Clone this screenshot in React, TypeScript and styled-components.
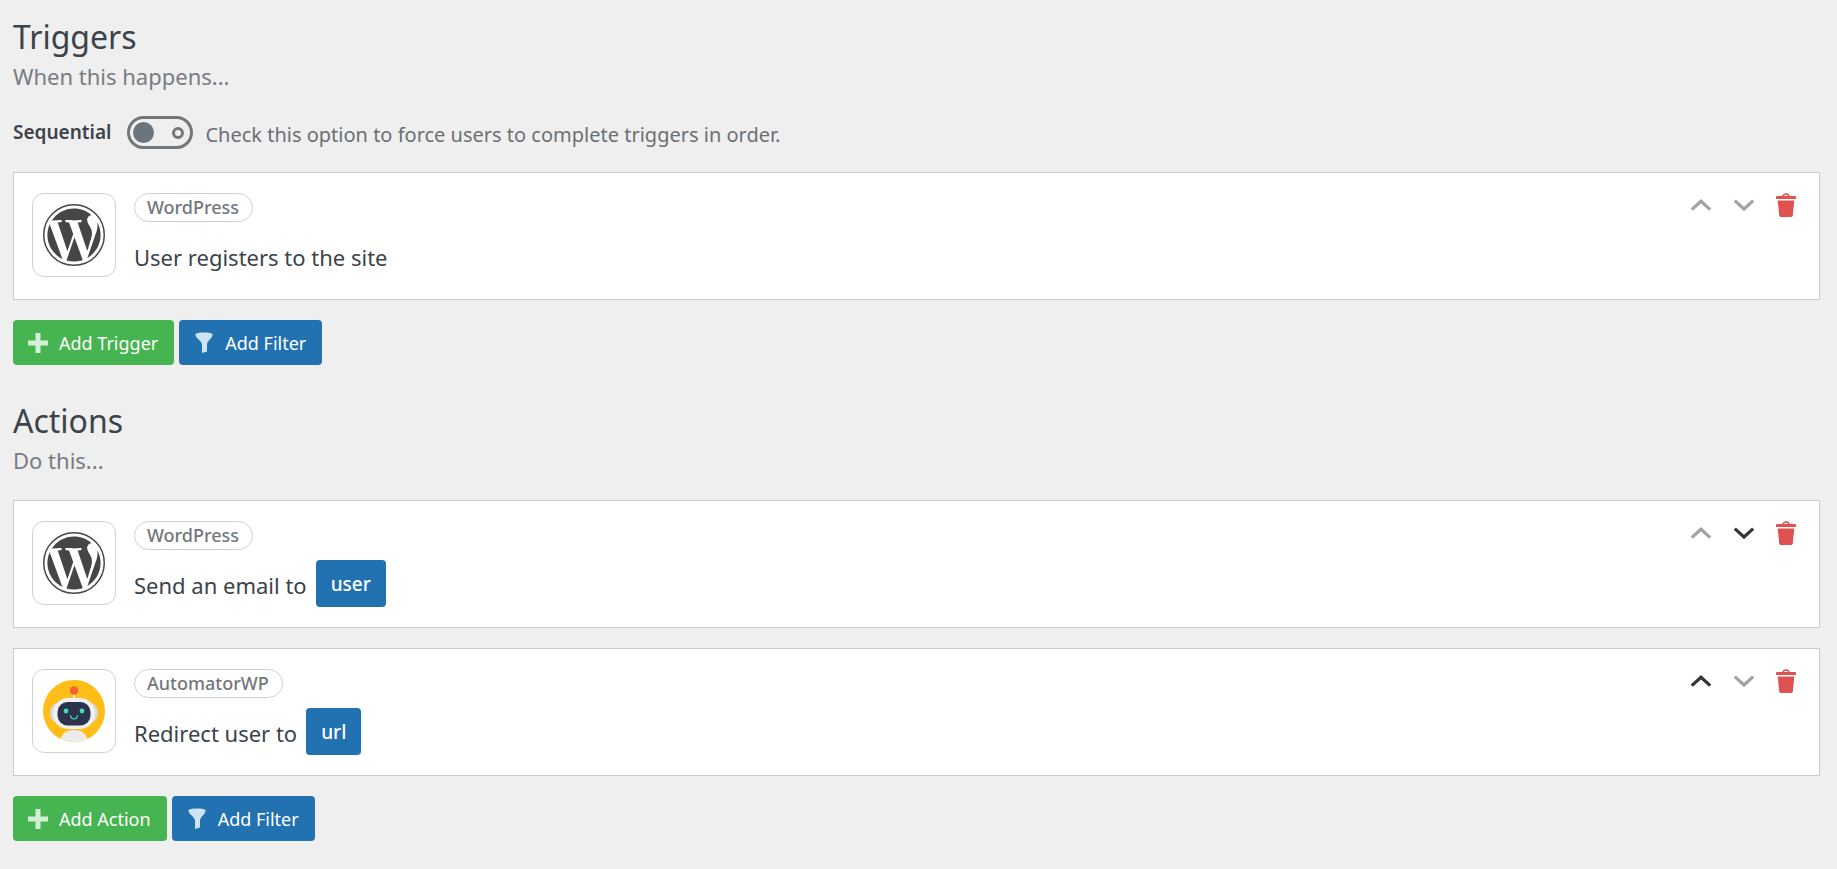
import React, { useState } from "react";
import styled, { createGlobalStyle } from "styled-components";

const fontStack = `"Noto Sans", "Open Sans", sans-serif`;

const GlobalStyle = createGlobalStyle`
  *, *::before, *::after { box-sizing: border-box; }
  body {
    margin: 0;
    background: #efefef;
    color: #3c434a;
    font-family: ${fontStack};
    font-size: 20px;
  }
`;

const Page = styled.main`
  padding: 16px 17px 24px 13px;
  display: flex;
  flex-direction: column;
  gap: 35px;
`;

const Section = styled.section`
  display: flex;
  flex-direction: column;
`;

const Heading = styled.h2`
  margin: 0;
  font-size: 32px;
  font-weight: 400;
  line-height: 41px;
`;

const Subheading = styled.p`
  margin: 3px 0 24px;
  font-size: 22px;
  line-height: 32px;
  color: #787c82;
`;

const OptionRow = styled.div`
  display: flex;
  align-items: center;
  margin-bottom: 23px;
  line-height: 33px;
`;

const OptionLabel = styled.label`
  line-height: 33px;
  font-size: 19px;
  font-weight: 600;
  margin-right: 16px;
`;

const OptionHint = styled.span`
  font-size: 20px;
  margin-left: 12px;
  padding-top: 5px;
  line-height: 28px;
  color: #6c6f73;
`;

const Switch = styled.input`
  appearance: none;
  display: flex;
  align-items: center;
  justify-content: space-between;
  flex: none;
  width: 66px;
  height: 33px;
  margin: 0;
  padding: 0 6px 0 3px;
  border: 3px solid #72777c;
  border-radius: 17px;
  cursor: pointer;

  &::before {
    content: "";
    width: 21px;
    height: 21px;
    border-radius: 50%;
    background: #6c757d;
  }
  &::after {
    content: "";
    width: 12px;
    height: 12px;
    border-radius: 50%;
    border: 3px solid #72777c;
  }
  &:checked {
    flex-direction: row-reverse;
    padding: 0 3px 0 6px;
  }
`;

const CardList = styled.div`
  display: flex;
  flex-direction: column;
  gap: 20px;
  margin-bottom: 20px;
`;

const Card = styled.article`
  display: flex;
  align-items: flex-start;
  gap: 18px;
  min-height: 128px;
  padding: 20px 20px 20px 18px;
  background: #fff;
  border: 1px solid #c9cbce;
`;

const IconTile = styled.div`
  display: flex;
  align-items: center;
  justify-content: center;
  flex: none;
  width: 84px;
  height: 84px;
  border: 1px solid #cfd1d4;
  border-radius: 12px;
  color: #464646;
`;

const CardBody = styled.div`
  flex: 1;
  display: flex;
  flex-direction: column;
  align-items: flex-start;
  gap: 10px;
`;

const Tag = styled.span`
  padding: 0 13px 0 12px;
  border: 1px solid #cfd1d4;
  border-radius: 15px;
  font-size: 18px;
  font-weight: 500;
  line-height: 27px;
  color: #72777c;
`;

const Sentence = styled.div`
  display: flex;
  align-items: center;
  gap: 9px;
`;

const SentenceText = styled.span`
  padding-top: 4px;
  font-size: 22px;
  line-height: 43px;
`;

const Token = styled.button`
  height: 47px;
  padding: 2px 15px 0;
  border: 0;
  border-radius: 4px;
  background: #2271b1;
  color: #fff;
  font: 500 19px/45px ${fontStack};
  cursor: pointer;
`;

const Controls = styled.div`
  display: flex;
  gap: 19px;
`;

const IconButton = styled.button<{ $tone: "dark" | "danger" }>`
  display: flex;
  padding: 0;
  border: 0;
  background: none;
  color: ${(p) => (p.$tone === "danger" ? "#e05252" : "#32373c")};
  cursor: pointer;

  &:disabled {
    color: #a0a3a6;
    cursor: default;
  }
`;

const ButtonRow = styled.div`
  display: flex;
  gap: 5px;
`;

const ActionButton = styled.button<{ $color: string }>`
  display: flex;
  align-items: center;
  gap: 9px;
  height: 45px;
  padding: 0 16px 0 13px;
  border: 0;
  border-radius: 4px;
  background: ${(p) => p.$color};
  color: #fff;
  font: 400 18px/45px ${fontStack};
  cursor: pointer;
`;

const ButtonText = styled.span`
  padding-top: 2px;
  line-height: 43px;
`;

const Chevron = ({ up }: { up?: boolean }) => (
  <svg width="24" height="24" viewBox="0 0 24 24" fill="none" aria-hidden="true">
    <path
      d={up ? "M2.8 16.6 12 8.2l9.2 8.4" : "M2.8 7.6 12 16l9.2-8.4"}
      stroke="currentColor"
      strokeWidth="3.2"
    />
  </svg>
);

const Trash = () => (
  <svg width="24" height="24" viewBox="0 0 24 24" aria-hidden="true">
    <path d="M8 3.4c0-3.200 6-3.200 6 0" fill="none" stroke="currentColor" strokeWidth="1.400" />
    <path
      d="M2 3h18c.6 0 1 .3 1 .9V6H1V3.900c0-.6.4-.9 1-.9ZM2.700 7.600h16.600l-1.500 15c-.1.800-.7 1.400-1.500 1.400H5.700c-.8 0-1.400-.6-1.500-1.400Z"
      fill="currentColor"
    />
  </svg>
);

const Plus = () => (
  <svg width="24" height="24" viewBox="0 0 24 24" aria-hidden="true">
    <path d="M9.500 2h5v7.500H22v5h-7.500V22h-5v-7.500H2v-5h7.500Z" fill="#d3f0d6" />
  </svg>
);

const Funnel = () => (
  <svg width="24" height="24" viewBox="0 0 24 24" aria-hidden="true">
    <path
      d="M3.500 3.400C3.500 1 20.500 1 20.500 3.400c0 4-5.500 6.200-5.500 10v7.200L10 22v-8.600c0-3.800-6.500-6-6.500-10Z"
      fill="#cfe3f7"
    />
  </svg>
);

const WordPressMark = () => (
  <svg width="62" height="62" viewBox="0 0 122.52 122.52" fill="currentColor" aria-hidden="true">
    <path d="M8.708 61.26c0 20.802 12.089 38.779 29.619 47.298L13.258 39.872c-2.916 6.536-4.55 13.769-4.55 21.388ZM96.740 58.608c0-6.495-2.333-10.993-4.334-14.494-2.664-4.329-5.161-7.995-5.161-12.324 0-4.831 3.664-9.328 8.825-9.328.233 0 .454.029.681.042-9.350-8.566-21.807-13.796-35.489-13.796-18.360 0-34.513 9.420-43.910 23.688 1.233.037 2.395.063 3.382.063 5.497 0 14.006-.667 14.006-.667 2.833-.167 3.167 3.994.337 4.329 0 0-2.847.335-6.015.501L48.200 93.547l11.501-34.493-8.188-22.434c-2.830-.166-5.511-.501-5.511-.501-2.832-.166-2.500-4.496.332-4.329 0 0 8.679.667 13.843.667 5.496 0 14.006-.667 14.006-.667 2.835-.167 3.168 3.994.337 4.329 0 0-2.853.335-6.015.501l18.992 56.494 5.242-17.517c2.272-7.269 4.001-12.815 4.001-16.989ZM62.184 65.857l-15.768 45.819c4.708 1.384 9.687 2.141 14.846 2.141 6.120 0 11.989-1.058 17.452-2.979-.141-.225-.269-.464-.374-.724ZM107.376 36.046c.226 1.674.354 3.471.354 5.404 0 5.333-.996 11.328-3.996 18.824l-16.053 46.413c15.624-9.111 26.133-26.038 26.133-45.426.001-9.137-2.333-17.729-6.438-25.215Z" />
    <circle cx="61.260" cy="61.260" r="59.800" fill="none" stroke="currentColor" strokeWidth="2.900" />
  </svg>
);

const Robot = () => (
  <svg width="62" height="62" viewBox="0 0 62 62" aria-hidden="true">
    <defs>
      <clipPath id="robot-disc">
        <circle cx="31" cy="31" r="31" />
      </clipPath>
    </defs>
    <circle cx="31" cy="31" r="31" fill="#ffbd17" />
    <g clipPath="url(#robot-disc)">
      <path d="M17 64c0-9 5.500-14 14-14s14 5 14 14Z" fill="#ececee" />
      <path d="M30 13h2v7h-2Z" fill="#f2f2f2" />
    </g>
    <circle cx="31" cy="10.500" r="4.200" fill="#f4602f" />
    <path
      d="M14 23c-4 1-7 5-7 10s3 9 7 10ZM48 23c4 1 7 5 7 10s-3 9-7 10Z"
      fill="#d9dade"
    />
    <rect x="10" y="18" width="42" height="31" rx="15" fill="#f0f0f2" />
    <rect x="14.500" y="22" width="33" height="23.500" rx="10" fill="#2d334a" />
    <circle cx="23" cy="31" r="2.400" fill="#3fdcc0" />
    <circle cx="39" cy="31" r="2.400" fill="#3fdcc0" />
    <path
      d="M27.500 35.500c.4 4.500 6.600 4.500 7 0"
      fill="none"
      stroke="#3fdcc0"
      strokeWidth="1.200"
      strokeLinecap="round"
    />
  </svg>
);

type StepProps = {
  integration: "WordPress" | "AutomatorWP";
  text: string;
  token?: string;
  canMoveUp?: boolean;
  canMoveDown?: boolean;
};

const Step = ({ integration, text, token, canMoveUp, canMoveDown }: StepProps) => (
  <Card>
    <IconTile>{integration === "WordPress" ? <WordPressMark /> : <Robot />}</IconTile>
    <CardBody>
      <Tag>{integration}</Tag>
      <Sentence>
        <SentenceText>{text}</SentenceText>
        {token && <Token type="button">{token}</Token>}
      </Sentence>
    </CardBody>
    <Controls>
      <IconButton type="button" $tone="dark" disabled={!canMoveUp} aria-label="Move up">
        <Chevron up />
      </IconButton>
      <IconButton type="button" $tone="dark" disabled={!canMoveDown} aria-label="Move down">
        <Chevron />
      </IconButton>
      <IconButton type="button" $tone="danger" aria-label="Delete">
        <Trash />
      </IconButton>
    </Controls>
  </Card>
);

const AddButtons = ({ label }: { label: string }) => (
  <ButtonRow>
    <ActionButton type="button" $color="#46b450">
      <Plus />
      <ButtonText>{label}</ButtonText>
    </ActionButton>
    <ActionButton type="button" $color="#2271b1">
      <Funnel />
      <ButtonText>Add Filter</ButtonText>
    </ActionButton>
  </ButtonRow>
);

export default function App() {
  const [sequential, setSequential] = useState(false);

  return (
    <>
      <GlobalStyle />
      <Page>
        <Section>
          <Heading>Triggers</Heading>
          <Subheading>When this happens...</Subheading>
          <OptionRow>
            <OptionLabel htmlFor="sequential">Sequential</OptionLabel>
            <Switch
              id="sequential"
              type="checkbox"
              role="switch"
              aria-describedby="sequential-hint"
              checked={sequential}
              onChange={(e) => setSequential(e.target.checked)}
            />
            <OptionHint id="sequential-hint">
              Check this option to force users to complete triggers in order.
            </OptionHint>
          </OptionRow>
          <CardList>
            <Step integration="WordPress" text="User registers to the site" />
          </CardList>
          <AddButtons label="Add Trigger" />
        </Section>
        <Section>
          <Heading>Actions</Heading>
          <Subheading>Do this...</Subheading>
          <CardList>
            <Step integration="WordPress" text="Send an email to" token="user" canMoveDown />
            <Step integration="AutomatorWP" text="Redirect user to" token="url" canMoveUp />
          </CardList>
          <AddButtons label="Add Action" />
        </Section>
      </Page>
    </>
  );
}
